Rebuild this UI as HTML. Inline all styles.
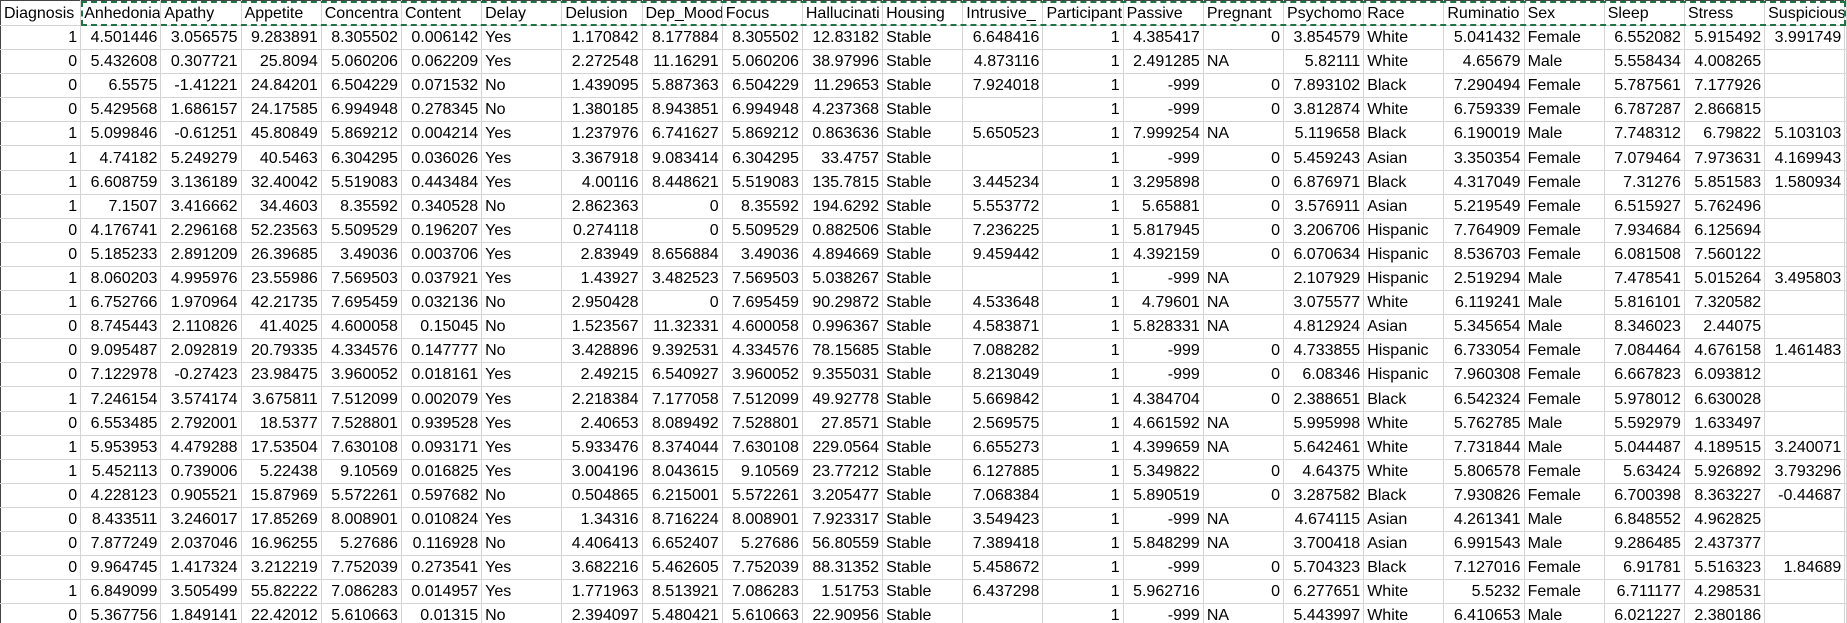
<!DOCTYPE html>
<html><head><meta charset="utf-8">
<style>
html,body{margin:0;padding:0;background:#fff;width:1847px;height:623px;overflow:hidden}
table{border-collapse:collapse;table-layout:fixed;width:1847px;font-family:"Liberation Sans",Arial,sans-serif;font-size:16px;color:#000}
td{border:1px solid #d4d4d4;padding:0 3px;white-space:nowrap;overflow:hidden;text-align:right;height:23.1px;line-height:22px;vertical-align:bottom}
tr.h td{text-align:left;height:24px;border-top:1px solid #444}
td.l{text-align:left}
td:first-child{border-left:1px solid #444}
#dash{position:absolute;left:81px;top:1px;width:1761px;height:21px;border:2px dashed #217346}
</style></head><body>
<div id="dash"></div>
<table>
<colgroup><col span="23" style="width:80.2px"><col></colgroup>
<tr class="h"><td>Diagnosis</td><td>Anhedonia</td><td>Apathy</td><td>Appetite</td><td>Concentra</td><td>Content</td><td>Delay</td><td>Delusion</td><td>Dep_Mood</td><td>Focus</td><td>Hallucinati</td><td>Housing</td><td>Intrusive_</td><td>Participant</td><td>Passive</td><td>Pregnant</td><td>Psychomo</td><td>Race</td><td>Ruminatio</td><td>Sex</td><td>Sleep</td><td>Stress</td><td>Suspicious</td><td></td></tr>
<tr><td>1</td><td>4.501446</td><td>3.056575</td><td>9.283891</td><td>8.305502</td><td>0.006142</td><td class="l">Yes</td><td>1.170842</td><td>8.177884</td><td>8.305502</td><td>12.83182</td><td class="l">Stable</td><td>6.648416</td><td>1</td><td>4.385417</td><td>0</td><td>3.854579</td><td class="l">White</td><td>5.041432</td><td class="l">Female</td><td>6.552082</td><td>5.915492</td><td>3.991749</td><td></td></tr>
<tr><td>0</td><td>5.432608</td><td>0.307721</td><td>25.8094</td><td>5.060206</td><td>0.062209</td><td class="l">Yes</td><td>2.272548</td><td>11.16291</td><td>5.060206</td><td>38.97996</td><td class="l">Stable</td><td>4.873116</td><td>1</td><td>2.491285</td><td class="l">NA</td><td>5.82111</td><td class="l">White</td><td>4.65679</td><td class="l">Male</td><td>5.558434</td><td>4.008265</td><td></td><td></td></tr>
<tr><td>0</td><td>6.5575</td><td>-1.41221</td><td>24.84201</td><td>6.504229</td><td>0.071532</td><td class="l">No</td><td>1.439095</td><td>5.887363</td><td>6.504229</td><td>11.29653</td><td class="l">Stable</td><td>7.924018</td><td>1</td><td>-999</td><td>0</td><td>7.893102</td><td class="l">Black</td><td>7.290494</td><td class="l">Female</td><td>5.787561</td><td>7.177926</td><td></td><td></td></tr>
<tr><td>0</td><td>5.429568</td><td>1.686157</td><td>24.17585</td><td>6.994948</td><td>0.278345</td><td class="l">No</td><td>1.380185</td><td>8.943851</td><td>6.994948</td><td>4.237368</td><td class="l">Stable</td><td></td><td>1</td><td>-999</td><td>0</td><td>3.812874</td><td class="l">White</td><td>6.759339</td><td class="l">Female</td><td>6.787287</td><td>2.866815</td><td></td><td></td></tr>
<tr><td>1</td><td>5.099846</td><td>-0.61251</td><td>45.80849</td><td>5.869212</td><td>0.004214</td><td class="l">Yes</td><td>1.237976</td><td>6.741627</td><td>5.869212</td><td>0.863636</td><td class="l">Stable</td><td>5.650523</td><td>1</td><td>7.999254</td><td class="l">NA</td><td>5.119658</td><td class="l">Black</td><td>6.190019</td><td class="l">Male</td><td>7.748312</td><td>6.79822</td><td>5.103103</td><td></td></tr>
<tr><td>1</td><td>4.74182</td><td>5.249279</td><td>40.5463</td><td>6.304295</td><td>0.036026</td><td class="l">Yes</td><td>3.367918</td><td>9.083414</td><td>6.304295</td><td>33.4757</td><td class="l">Stable</td><td></td><td>1</td><td>-999</td><td>0</td><td>5.459243</td><td class="l">Asian</td><td>3.350354</td><td class="l">Female</td><td>7.079464</td><td>7.973631</td><td>4.169943</td><td></td></tr>
<tr><td>1</td><td>6.608759</td><td>3.136189</td><td>32.40042</td><td>5.519083</td><td>0.443484</td><td class="l">Yes</td><td>4.00116</td><td>8.448621</td><td>5.519083</td><td>135.7815</td><td class="l">Stable</td><td>3.445234</td><td>1</td><td>3.295898</td><td>0</td><td>6.876971</td><td class="l">Black</td><td>4.317049</td><td class="l">Female</td><td>7.31276</td><td>5.851583</td><td>1.580934</td><td></td></tr>
<tr><td>1</td><td>7.1507</td><td>3.416662</td><td>34.4603</td><td>8.35592</td><td>0.340528</td><td class="l">No</td><td>2.862363</td><td>0</td><td>8.35592</td><td>194.6292</td><td class="l">Stable</td><td>5.553772</td><td>1</td><td>5.65881</td><td>0</td><td>3.576911</td><td class="l">Asian</td><td>5.219549</td><td class="l">Female</td><td>6.515927</td><td>5.762496</td><td></td><td></td></tr>
<tr><td>0</td><td>4.176741</td><td>2.296168</td><td>52.23563</td><td>5.509529</td><td>0.196207</td><td class="l">Yes</td><td>0.274118</td><td>0</td><td>5.509529</td><td>0.882506</td><td class="l">Stable</td><td>7.236225</td><td>1</td><td>5.817945</td><td>0</td><td>3.206706</td><td class="l">Hispanic</td><td>7.764909</td><td class="l">Female</td><td>7.934684</td><td>6.125694</td><td></td><td></td></tr>
<tr><td>0</td><td>5.185233</td><td>2.891209</td><td>26.39685</td><td>3.49036</td><td>0.003706</td><td class="l">Yes</td><td>2.83949</td><td>8.656884</td><td>3.49036</td><td>4.894669</td><td class="l">Stable</td><td>9.459442</td><td>1</td><td>4.392159</td><td>0</td><td>6.070634</td><td class="l">Hispanic</td><td>8.536703</td><td class="l">Female</td><td>6.081508</td><td>7.560122</td><td></td><td></td></tr>
<tr><td>1</td><td>8.060203</td><td>4.995976</td><td>23.55986</td><td>7.569503</td><td>0.037921</td><td class="l">Yes</td><td>1.43927</td><td>3.482523</td><td>7.569503</td><td>5.038267</td><td class="l">Stable</td><td></td><td>1</td><td>-999</td><td class="l">NA</td><td>2.107929</td><td class="l">Hispanic</td><td>2.519294</td><td class="l">Male</td><td>7.478541</td><td>5.015264</td><td>3.495803</td><td></td></tr>
<tr><td>1</td><td>6.752766</td><td>1.970964</td><td>42.21735</td><td>7.695459</td><td>0.032136</td><td class="l">No</td><td>2.950428</td><td>0</td><td>7.695459</td><td>90.29872</td><td class="l">Stable</td><td>4.533648</td><td>1</td><td>4.79601</td><td class="l">NA</td><td>3.075577</td><td class="l">White</td><td>6.119241</td><td class="l">Male</td><td>5.816101</td><td>7.320582</td><td></td><td></td></tr>
<tr><td>0</td><td>8.745443</td><td>2.110826</td><td>41.4025</td><td>4.600058</td><td>0.15045</td><td class="l">No</td><td>1.523567</td><td>11.32331</td><td>4.600058</td><td>0.996367</td><td class="l">Stable</td><td>4.583871</td><td>1</td><td>5.828331</td><td class="l">NA</td><td>4.812924</td><td class="l">Asian</td><td>5.345654</td><td class="l">Male</td><td>8.346023</td><td>2.44075</td><td></td><td></td></tr>
<tr><td>0</td><td>9.095487</td><td>2.092819</td><td>20.79335</td><td>4.334576</td><td>0.147777</td><td class="l">No</td><td>3.428896</td><td>9.392531</td><td>4.334576</td><td>78.15685</td><td class="l">Stable</td><td>7.088282</td><td>1</td><td>-999</td><td>0</td><td>4.733855</td><td class="l">Hispanic</td><td>6.733054</td><td class="l">Female</td><td>7.084464</td><td>4.676158</td><td>1.461483</td><td></td></tr>
<tr><td>0</td><td>7.122978</td><td>-0.27423</td><td>23.98475</td><td>3.960052</td><td>0.018161</td><td class="l">Yes</td><td>2.49215</td><td>6.540927</td><td>3.960052</td><td>9.355031</td><td class="l">Stable</td><td>8.213049</td><td>1</td><td>-999</td><td>0</td><td>6.08346</td><td class="l">Hispanic</td><td>7.960308</td><td class="l">Female</td><td>6.667823</td><td>6.093812</td><td></td><td></td></tr>
<tr><td>1</td><td>7.246154</td><td>3.574174</td><td>3.675811</td><td>7.512099</td><td>0.002079</td><td class="l">Yes</td><td>2.218384</td><td>7.177058</td><td>7.512099</td><td>49.92778</td><td class="l">Stable</td><td>5.669842</td><td>1</td><td>4.384704</td><td>0</td><td>2.388651</td><td class="l">Black</td><td>6.542324</td><td class="l">Female</td><td>5.978012</td><td>6.630028</td><td></td><td></td></tr>
<tr><td>0</td><td>6.553485</td><td>2.792001</td><td>18.5377</td><td>7.528801</td><td>0.939528</td><td class="l">Yes</td><td>2.40653</td><td>8.089492</td><td>7.528801</td><td>27.8571</td><td class="l">Stable</td><td>2.569575</td><td>1</td><td>4.661592</td><td class="l">NA</td><td>5.995998</td><td class="l">White</td><td>5.762785</td><td class="l">Male</td><td>5.592979</td><td>1.633497</td><td></td><td></td></tr>
<tr><td>1</td><td>5.953953</td><td>4.479288</td><td>17.53504</td><td>7.630108</td><td>0.093171</td><td class="l">Yes</td><td>5.933476</td><td>8.374044</td><td>7.630108</td><td>229.0564</td><td class="l">Stable</td><td>6.655273</td><td>1</td><td>4.399659</td><td class="l">NA</td><td>5.642461</td><td class="l">White</td><td>7.731844</td><td class="l">Male</td><td>5.044487</td><td>4.189515</td><td>3.240071</td><td></td></tr>
<tr><td>1</td><td>5.452113</td><td>0.739006</td><td>5.22438</td><td>9.10569</td><td>0.016825</td><td class="l">Yes</td><td>3.004196</td><td>8.043615</td><td>9.10569</td><td>23.77212</td><td class="l">Stable</td><td>6.127885</td><td>1</td><td>5.349822</td><td>0</td><td>4.64375</td><td class="l">White</td><td>5.806578</td><td class="l">Female</td><td>5.63424</td><td>5.926892</td><td>3.793296</td><td></td></tr>
<tr><td>0</td><td>4.228123</td><td>0.905521</td><td>15.87969</td><td>5.572261</td><td>0.597682</td><td class="l">No</td><td>0.504865</td><td>6.215001</td><td>5.572261</td><td>3.205477</td><td class="l">Stable</td><td>7.068384</td><td>1</td><td>5.890519</td><td>0</td><td>3.287582</td><td class="l">Black</td><td>7.930826</td><td class="l">Female</td><td>6.700398</td><td>8.363227</td><td>-0.44687</td><td></td></tr>
<tr><td>0</td><td>8.433511</td><td>3.246017</td><td>17.85269</td><td>8.008901</td><td>0.010824</td><td class="l">Yes</td><td>1.34316</td><td>8.716224</td><td>8.008901</td><td>7.923317</td><td class="l">Stable</td><td>3.549423</td><td>1</td><td>-999</td><td class="l">NA</td><td>4.674115</td><td class="l">Asian</td><td>4.261341</td><td class="l">Male</td><td>6.848552</td><td>4.962825</td><td></td><td></td></tr>
<tr><td>0</td><td>7.877249</td><td>2.037046</td><td>16.96255</td><td>5.27686</td><td>0.116928</td><td class="l">No</td><td>4.406413</td><td>6.652407</td><td>5.27686</td><td>56.80559</td><td class="l">Stable</td><td>7.389418</td><td>1</td><td>5.848299</td><td class="l">NA</td><td>3.700418</td><td class="l">Asian</td><td>6.991543</td><td class="l">Male</td><td>9.286485</td><td>2.437377</td><td></td><td></td></tr>
<tr><td>0</td><td>9.964745</td><td>1.417324</td><td>3.212219</td><td>7.752039</td><td>0.273541</td><td class="l">Yes</td><td>3.682216</td><td>5.462605</td><td>7.752039</td><td>88.31352</td><td class="l">Stable</td><td>5.458672</td><td>1</td><td>-999</td><td>0</td><td>5.704323</td><td class="l">Black</td><td>7.127016</td><td class="l">Female</td><td>6.91781</td><td>5.516323</td><td>1.84689</td><td></td></tr>
<tr><td>1</td><td>6.849099</td><td>3.505499</td><td>55.82222</td><td>7.086283</td><td>0.014957</td><td class="l">Yes</td><td>1.771963</td><td>8.513921</td><td>7.086283</td><td>1.51753</td><td class="l">Stable</td><td>6.437298</td><td>1</td><td>5.962716</td><td>0</td><td>6.277651</td><td class="l">White</td><td>5.5232</td><td class="l">Female</td><td>6.711177</td><td>4.298531</td><td></td><td></td></tr>
<tr><td>0</td><td>5.367756</td><td>1.849141</td><td>22.42012</td><td>5.610663</td><td>0.01315</td><td class="l">No</td><td>2.394097</td><td>5.480421</td><td>5.610663</td><td>22.90956</td><td class="l">Stable</td><td></td><td>1</td><td>-999</td><td class="l">NA</td><td>5.443997</td><td class="l">White</td><td>6.410653</td><td class="l">Male</td><td>6.021227</td><td>2.380186</td><td></td><td></td></tr>
</table>
</body></html>
